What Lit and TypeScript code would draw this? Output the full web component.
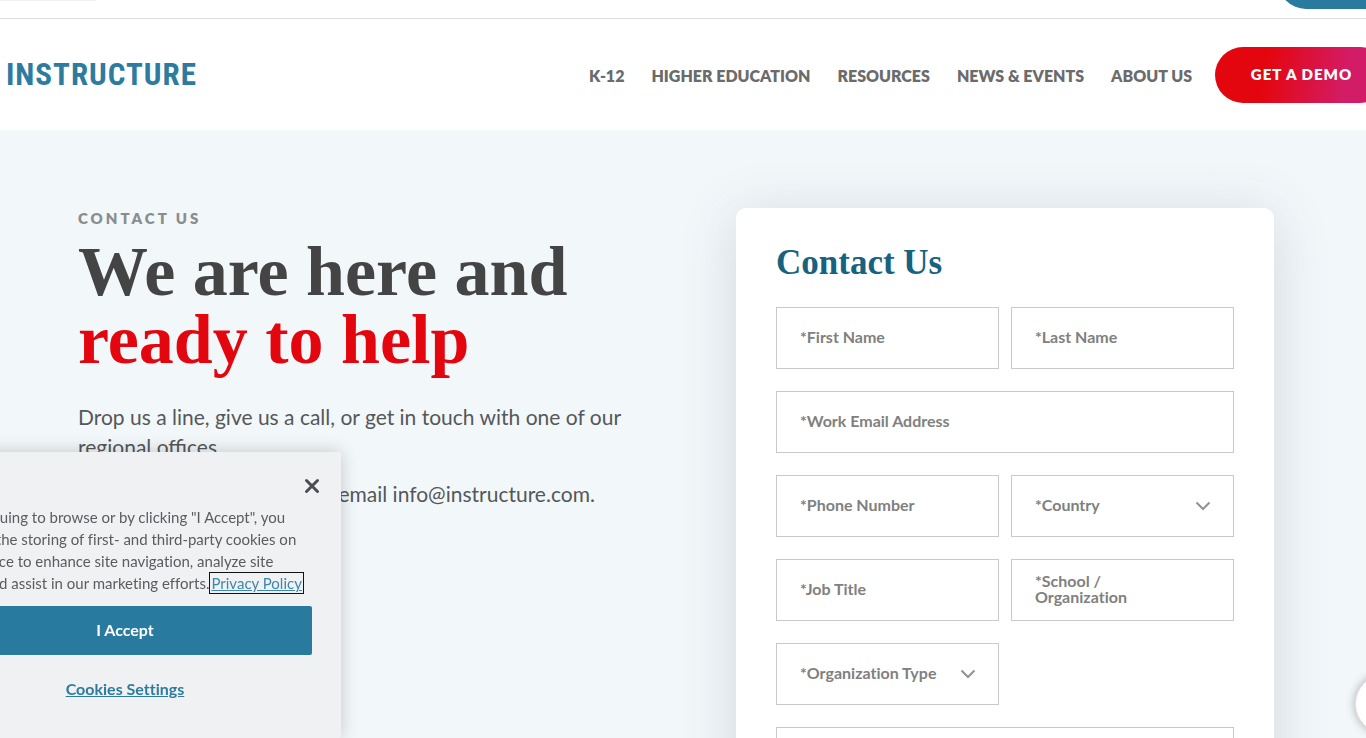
import { LitElement, html, css, svg, nothing } from "lit";
import { customElement } from "lit/decorators.js";
import { classMap } from "lit/directives/class-map.js";

interface Field {
  id: string;
  label: string;
  kind: "text" | "email" | "tel" | "select";
  wide?: boolean;
  alone?: boolean;
}

const FIELDS: Field[] = [
  { id: "first-name", label: "*First Name", kind: "text" },
  { id: "last-name", label: "*Last Name", kind: "text" },
  { id: "email", label: "*Work Email Address", kind: "email", wide: true },
  { id: "phone", label: "*Phone Number", kind: "tel" },
  { id: "country", label: "*Country", kind: "select" },
  { id: "job", label: "*Job Title", kind: "text" },
  { id: "school", label: "*School / Organization", kind: "text" },
  { id: "org-type", label: "*Organization Type", kind: "select", alone: true },
  { id: "message", label: "", kind: "text", wide: true },
];

const chevron = svg`<path d="M1.5 1.5 L8 8 L14.5 1.5" fill="none" stroke="#929292" stroke-width="2" />`;

@customElement("site-header")
class SiteHeader extends LitElement {
  static styles = css`
    :host {
      display: block;
      background: #fff;
    }
    .strip {
      display: flex;
      justify-content: space-between;
      align-items: flex-end;
      height: 18px;
      overflow: hidden;
      border-bottom: 1px solid #dcdddd;
    }
    .tab {
      align-self: flex-start;
      width: 96px;
      height: 1px;
      background: #f1f2f3;
    }
    .login {
      width: 120px;
      height: 56px;
      margin: 0 -32px 9px 0;
      border-radius: 28px;
      background: #287a9f;
    }
    .bar {
      display: flex;
      align-items: center;
      justify-content: space-between;
      height: 111px;
      padding-left: 6px;
      overflow: hidden;
    }
    .logo {
      color: #2d7b9f;
      font: 700 31px/40px "Roboto Condensed", sans-serif;
      letter-spacing: 1px;
      text-decoration: none;
    }
    nav {
      display: flex;
      align-items: center;
      gap: 27px;
    }
    .link {
      padding-top: 2px;
      color: #6b6b6b;
      font: 800 16px/20px Lato, sans-serif;
      text-decoration: none;
      white-space: nowrap;
    }
    .demo {
      flex: none;
      width: 173px;
      height: 56px;
      margin: 0 -22px 0 -4px;
      padding: 0 0 2px;
      border: 0;
      border-radius: 28px;
      background: linear-gradient(100deg, #e4060f 30%, #d31c68 76%);
      color: #fff;
      font: 800 15px/20px Lato, sans-serif;
      letter-spacing: 1px;
    }
  `;
  render() {
    return html`
      <div class="strip"><span class="tab"></span><span class="login"></span></div>
      <div class="bar">
        <a class="logo" href="#">INSTRUCTURE</a>
        <nav>
          ${["K-12", "HIGHER EDUCATION", "RESOURCES", "NEWS & EVENTS", "ABOUT US"].map(
            (t) => html`<a class="link" href="#">${t}</a>`
          )}
          <button class="demo">GET A DEMO</button>
        </nav>
      </div>
    `;
  }
}

@customElement("contact-form")
class ContactForm extends LitElement {
  static styles = css`
    :host {
      display: block;
      padding: 33px 40px 60px;
      border-radius: 10px;
      background: #fff;
      box-shadow: 0 8px 56px rgba(60, 75, 85, 0.18);
    }
    h2 {
      margin: 0 0 22px;
      color: #16627f;
      font: 700 35px/44px "Liberation Serif", serif;
    }
    form {
      display: grid;
      grid-template-columns: 1fr 1fr;
      gap: 22px 12px;
    }
    .field {
      display: grid;
      grid-template: 62px / 1fr;
      align-items: center;
    }
    .wide {
      grid-column: 1 / -1;
    }
    .alone {
      grid-column: 1;
    }
    label,
    input,
    select,
    svg {
      grid-area: 1 / 1;
    }
    label {
      z-index: 1;
      max-width: 150px;
      margin-left: 24px;
      padding-bottom: 2px;
      color: #808080;
      font: 700 16px/16px Lato, sans-serif;
      font-variant-ligatures: none;
      pointer-events: none;
    }
    input,
    select {
      appearance: none;
      box-sizing: border-box;
      width: 100%;
      height: 62px;
      margin: 0;
      padding: 0 24px;
      border: 1px solid #c8c9ca;
      border-radius: 0;
      background: #fff;
      color: #444;
      font: 400 16px/20px Lato, sans-serif;
    }
    svg {
      z-index: 1;
      justify-self: end;
      margin-right: 23px;
      pointer-events: none;
    }
  `;
  render() {
    return html`
      <h2>Contact Us</h2>
      <form>
        ${FIELDS.map(
          (f) => html`
            <div class=${classMap({ field: true, wide: !!f.wide, alone: !!f.alone })}>
              ${f.label ? html`<label for=${f.id}>${f.label}</label>` : nothing}
              ${f.kind === "select"
                ? html`<select id=${f.id}><option></option></select>
                    <svg width="16" height="10" viewBox="0 0 16 10">${chevron}</svg>`
                : html`<input id=${f.id} type=${f.kind} aria-label=${f.label ? nothing : "Message"} />`}
            </div>
          `
        )}
      </form>
    `;
  }
}

@customElement("cookie-banner")
class CookieBanner extends LitElement {
  static styles = css`
    :host {
      position: fixed;
      left: -91px;
      bottom: 0;
      box-sizing: border-box;
      width: 432px;
      height: 286px;
      padding: 23px 29px 0;
      border-radius: 2px;
      background: #f0f1f3;
      box-shadow: 0 0 18px rgba(0, 0, 0, 0.2);
      color: #5a5c60;
      font: 400 15px/22px Lato, sans-serif;
      font-variant-ligatures: none;
    }
    .top {
      display: flex;
      justify-content: flex-end;
      margin-bottom: 10px;
    }
    .close {
      display: flex;
      align-items: center;
      justify-content: center;
      width: 16px;
      height: 21px;
      margin-right: -8px;
      padding: 0;
      border: 0;
      background: none;
    }
    p {
      margin: 0;
      white-space: nowrap;
    }
    .line {
      display: block;
    }
    .policy {
      padding: 2px;
      outline: 1px solid #111;
      outline-offset: -1px;
      color: #3e88ab;
    }
    .accept {
      display: block;
      width: 100%;
      height: 49px;
      margin: 12px 0 0;
      padding: 0 0 2px;
      border: 0;
      border-radius: 2px;
      background: #287a9f;
      color: #fff;
      font: 700 16px/20px Lato, sans-serif;
    }
    .settings {
      display: block;
      margin: 23px auto 0;
      padding: 0;
      border: 0;
      background: none;
      color: #2d7b9f;
      font: 700 16px/22px Lato, sans-serif;
      font-variant-ligatures: none;
      text-decoration: underline;
    }
  `;
  render() {
    return html`
      <div class="top">
        <button class="close" aria-label="Close">
          <svg width="16" height="16" viewBox="0 0 16 16">
            <path d="M2.5 2.5 L13.5 13.5 M13.5 2.5 L2.5 13.5" stroke="#4b4d50" stroke-width="3" stroke-linecap="round" />
          </svg>
        </button>
      </div>
      <p>
        <span class="line">By continuing to browse or by clicking "I Accept", you</span>
        <span class="line">agree to the storing of first- and third-party cookies on</span>
        <span class="line">your device to enhance site navigation, analyze site</span>
        <span class="line">usage, and assist in our marketing efforts.<a class="policy" href="#">Privacy Policy</a></span>
      </p>
      <button class="accept">I Accept</button>
      <button class="settings">Cookies Settings</button>
    `;
  }
}

@customElement("app-root")
class AppRoot extends LitElement {
  static styles = css`
    :host {
      display: block;
      height: 100vh;
      overflow: hidden;
      background: #f2f7fa;
    }
    .hero {
      display: grid;
      grid-template-columns: 1fr 538px;
      column-gap: 80px;
      align-items: start;
      padding: 78px 92px 0 78px;
    }
    .eyebrow {
      margin: 0;
      color: #8a8d8e;
      font: 800 15px/20px Lato, sans-serif;
      letter-spacing: 3px;
    }
    h1 {
      margin: 10px 0 28px;
      color: #444;
      font: 700 70px/68px "Liberation Serif", serif;
      white-space: nowrap;
    }
    .red {
      display: block;
      color: #e4060f;
    }
    .copy {
      margin: 0 0 17px;
      color: #55575a;
      font: 400 21px/30px Lato, sans-serif;
    }
    .chat {
      position: fixed;
      right: -49px;
      bottom: 4px;
      width: 60px;
      height: 60px;
      padding: 0;
      border: 1px solid #eedde0;
      border-radius: 50%;
      background: #fff;
      box-shadow: 0 0 10px rgba(0, 0, 0, 0.3);
    }
  `;
  render() {
    return html`
      <site-header></site-header>
      <main class="hero">
        <section>
          <p class="eyebrow">CONTACT US</p>
          <h1>We are here and <span class="red">ready to help</span></h1>
          <p class="copy">Drop us a line, give us a call, or get in touch with one of our regional offices.</p>
          <p class="copy">For general inquiries, please email info@instructure.com.</p>
        </section>
        <contact-form></contact-form>
      </main>
      <cookie-banner></cookie-banner>
      <button class="chat" aria-label="Chat"></button>
    `;
  }
}
